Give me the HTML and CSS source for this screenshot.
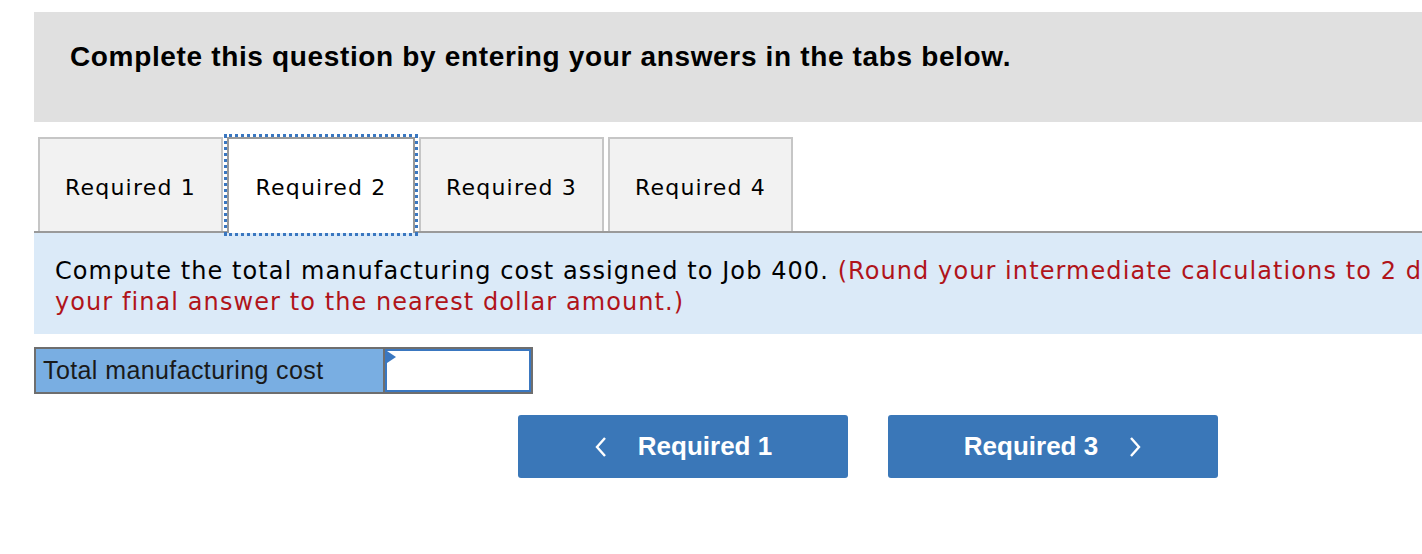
FILE: index.html
```html
<!DOCTYPE html>
<html>
<head>
<meta charset="utf-8">
<link rel="stylesheet" href="styles.css">
</head>
<body>
<div class="page">
  <div class="header">Complete this question by entering your answers in the tabs below.</div>
  <div class="tabs">
    <div class="tab">Required 1</div>
    <div class="tab active">Required 2</div>
    <div class="tab">Required 3</div>
    <div class="tab">Required 4</div>
  </div>
  <div class="panel">
    <p class="instr">Compute the total manufacturing cost assigned to Job 400. <span class="red">(Round your intermediate calculations to 2 decimal places and round your final answer to the nearest dollar amount.)</span></p>
  </div>
  <div class="answer">
    <div class="label">Total manufacturing cost</div>
    <div class="input"><span class="tri"></span></div>
  </div>
  <div class="nav">
    <button class="btn"><svg class="chev" width="14" height="22" viewBox="0 0 14 22"><path d="M11 2 L3 11 L11 20" fill="none" stroke="#fff" stroke-width="2.4"/></svg><span>Required 1</span></button>
    <button class="btn"><span>Required 3</span><svg class="chev" width="14" height="22" viewBox="0 0 14 22"><path d="M3 2 L11 11 L3 20" fill="none" stroke="#fff" stroke-width="2.4"/></svg></button>
  </div>
</div>
</body>
</html>
```
FILE: styles.css
```css
html, body {
  margin: 0;
  padding: 0;
  background: #fff;
  overflow: hidden;
}
body {
  width: 1422px;
  height: 554px;
}
.page {
  margin: 12px 0 0 34px;
  width: 1668px;
}
.header {
  background: #e0e0e0;
  height: 110px;
  box-sizing: border-box;
  padding: 29px 0 0 36px;
  font-family: "Liberation Sans", Arial, sans-serif;
  font-weight: bold;
  font-size: 28px;
  letter-spacing: 0.65px;
  color: #000;
}
.tabs {
  display: flex;
  gap: 4px;
  margin-top: 15px;
  padding-left: 4px;
  border-bottom: 2px solid #9a9a9a;
  height: 94px;
}
.tab {
  width: 185px;
  box-sizing: border-box;
  height: 94px;
  border: 2px solid #c6c6c6;
  border-bottom: none;
  background: #f2f2f2;
  display: flex;
  align-items: center;
  justify-content: center;
  padding-top: 4px;
  font-family: "DejaVu Sans", Verdana, sans-serif;
  font-size: 22px;
  letter-spacing: 1.2px;
  color: #000;
}
.tab.active {
  width: 188px;
  background: #fff;
  height: 96px;
  padding-top: 2px;
  border: 2px solid #999;
  border-bottom: none;
  outline: 3px dotted #3a77c0;
  outline-offset: 0;
}
.panel {
  background: #dbeaf8;
  height: 101px;
  box-sizing: border-box;
  padding: 23px 0 0 21px;
  margin-right: -40px;
}
.instr {
  margin: 0;
  font-family: "DejaVu Sans", Verdana, sans-serif;
  font-size: 24px;
  letter-spacing: 1.08px;
  line-height: 31px;
  color: #000;
}
.red {
  color: #b0141a;
}
.answer {
  display: flex;
  margin-top: 13px;
  width: 499px;
  height: 47px;
  box-sizing: border-box;
  border: 2px solid #6e6e6e;
}
.label {
  width: 349px;
  background: #79aee2;
  border-right: 2px solid #6e6e6e;
  box-sizing: border-box;
  padding-left: 7px;
  display: flex;
  align-items: center;
  font-family: "Liberation Sans", Arial, sans-serif;
  font-size: 25px;
  letter-spacing: 0.4px;
  color: #1a1a1a;
}
.input {
  flex: 1;
  position: relative;
  background: #fff;
  border: 2px solid #3a77c0;
  box-sizing: border-box;
}
.tri {
  position: absolute;
  left: 0;
  top: 0;
  width: 0;
  height: 0;
  border-top: 6px solid transparent;
  border-bottom: 6px solid transparent;
  border-left: 9px solid #3a77c0;
}
.nav {
  display: flex;
  justify-content: center;
  gap: 40px;
  margin-top: 21px;
}
.btn {
  width: 330px;
  height: 63px;
  background: #3a77b8;
  border: none;
  border-radius: 3px;
  color: #fff;
  font-family: "Liberation Sans", Arial, sans-serif;
  font-weight: bold;
  font-size: 26px;
  display: flex;
  align-items: center;
  justify-content: center;
  gap: 30px;
  padding: 0;
}
.chev {
  display: block;
}
```
